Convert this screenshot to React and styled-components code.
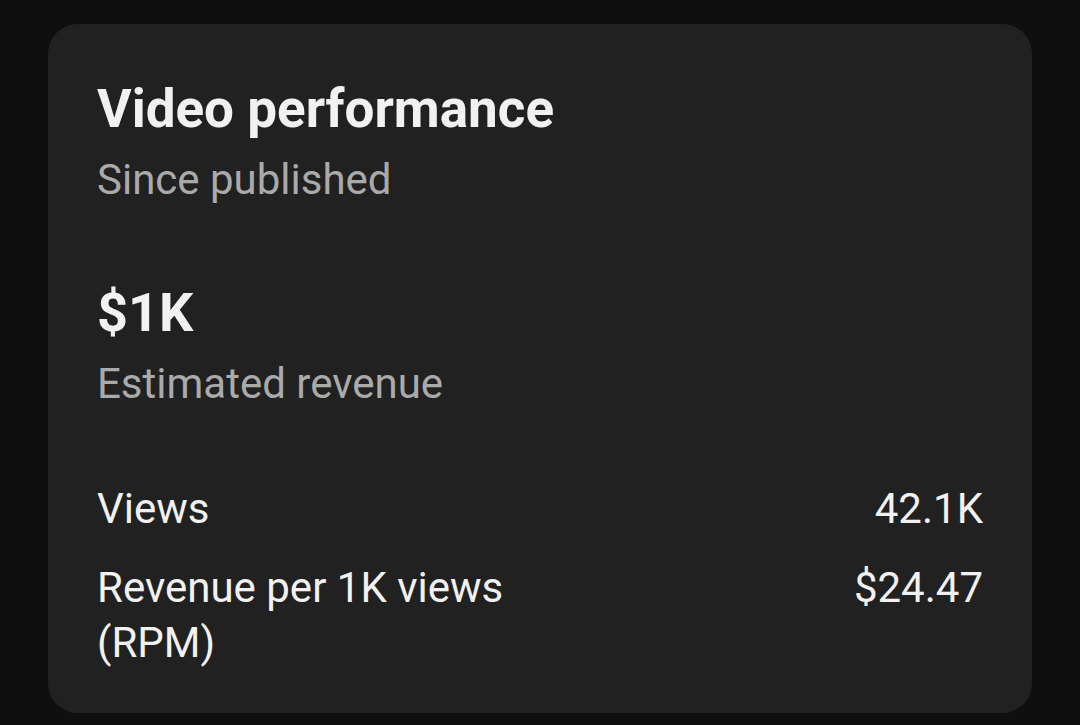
import styled, { createGlobalStyle } from "styled-components";

const GlobalStyle = createGlobalStyle`
  html, body {
    margin: 0;
    padding: 0;
    background: #0f0f0f;
    font-family: Roboto, "Noto Sans", sans-serif;
  }
`;

const Page = styled.div`
  width: 1080px;
  height: 725px;
  box-sizing: border-box;
  padding: 24px 48px 12px 48px;
  background: #0f0f0f;
`;

const Card = styled.section`
  box-sizing: border-box;
  height: 689px;
  background: #212121;
  border-radius: 30px;
  padding: 54px 49px 40px 49px;
  display: flex;
  flex-direction: column;
`;

const Title = styled.h1`
  margin: 0;
  font-size: 53px;
  line-height: 62px;
  font-weight: 700;
  color: #f1f1f1;
`;

const Subtle = styled.div`
  margin-top: ${(p) => p.$gap}px;
  font-size: 42px;
  line-height: 52px;
  color: #aaaaaa;
`;

const Amount = styled.div`
  margin-top: 76px;
  font-size: 54px;
  line-height: 62px;
  font-weight: 700;
  color: #f1f1f1;
`;

const Metrics = styled.div`
  margin-top: 71px;
  display: flex;
  flex-direction: column;
  gap: 24px;
`;

const Row = styled.div`
  display: flex;
  justify-content: space-between;
  align-items: flex-start;
  font-size: 42px;
  line-height: 55px;
  color: #f1f1f1;
`;

const Label = styled.span`
  max-width: 460px;
`;

const Value = styled.span`
  text-align: right;
`;

const metrics = [
  { label: "Views", value: "42.1K" },
  { label: "Revenue per 1K views (RPM)", value: "$24.47" },
];

export default function App() {
  return (
    <Page>
      <GlobalStyle />
      <Card>
        <Title>Video performance</Title>
        <Subtle $gap={14}>Since published</Subtle>
        <Amount>$1K</Amount>
        <Subtle $gap={14}>Estimated revenue</Subtle>
        <Metrics>
          {metrics.map((m) => (
            <Row key={m.label}>
              <Label>{m.label}</Label>
              <Value>{m.value}</Value>
            </Row>
          ))}
        </Metrics>
      </Card>
    </Page>
  );
}
